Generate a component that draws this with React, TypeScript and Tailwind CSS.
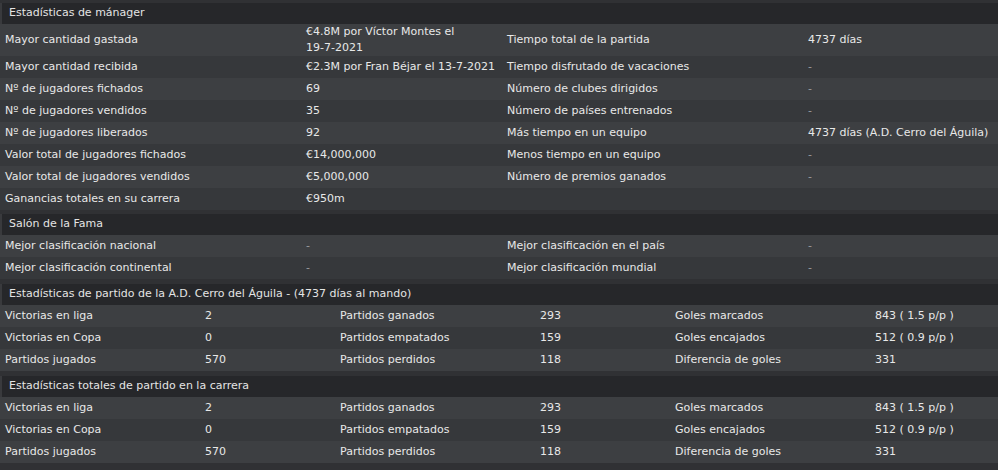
import React from 'react';

type Cell = string;

const managerRows: Cell[][] = [
  ['Mayor cantidad gastada', '€4.8M por Víctor Montes el 19-7-2021', 'Tiempo total de la partida', '4737 días'],
  ['Mayor cantidad recibida', '€2.3M por Fran Béjar el 13-7-2021', 'Tiempo disfrutado de vacaciones', '-'],
  ['Nº de jugadores fichados', '69', 'Número de clubes dirigidos', '-'],
  ['Nº de jugadores vendidos', '35', 'Número de países entrenados', '-'],
  ['Nº de jugadores liberados', '92', 'Más tiempo en un equipo', '4737 días (A.D. Cerro del Águila)'],
  ['Valor total de jugadores fichados', '€14,000,000', 'Menos tiempo en un equipo', '-'],
  ['Valor total de jugadores vendidos', '€5,000,000', 'Número de premios ganados', '-'],
  ['Ganancias totales en su carrera', '€950m', '', ''],
];

const fameRows: Cell[][] = [
  ['Mejor clasificación nacional', '-', 'Mejor clasificación en el país', '-'],
  ['Mejor clasificación continental', '-', 'Mejor clasificación mundial', '-'],
];

const matchRows: Cell[][] = [
  ['Victorias en liga', '2', 'Partidos ganados', '293', 'Goles marcados', '843 ( 1.5 p/p )'],
  ['Victorias en Copa', '0', 'Partidos empatados', '159', 'Goles encajados', '512 ( 0.9 p/p )'],
  ['Partidos jugados', '570', 'Partidos perdidos', '118', 'Diferencia de goles', '331'],
];

const Header = ({ title, className = '' }: { title: string; className?: string }) => (
  <div className={`h-[21px] flex items-center bg-[#26272a] border-l-2 border-[#393a3d] pl-[7px] text-[#e4e4e4] ${className}`}>
    {title}
  </div>
);

const rowBg = (i: number) => (i % 2 === 0 ? 'bg-[#3d3f42]' : 'bg-[#36383b]');

const cellText = (v: string) => (v === '-' ? 'text-[#9a9c9f]' : 'text-[#e8e8e8]');

// dates like 19-7-2021 must not break at the hyphens
const Words = ({ text }: { text: string }) => (
  <>
    {text.split(' ').map((w, k) => (
      <React.Fragment key={k}>
        {k > 0 && ' '}
        {w.length > 1 && w.includes('-') ? <span className="whitespace-nowrap">{w}</span> : w}
      </React.Fragment>
    ))}
  </>
);

const FourColRows = ({ rows }: { rows: Cell[][] }) => (
  <div>
    {rows.map((r, i) => (
      <div
        key={i}
        className={`grid grid-cols-[301px_201px_301px_195px] items-center ${rowBg(i)} ${
          i === 0 && r[1].length > 34 ? 'min-h-[30px]' : 'h-[22px]'
        }`}
      >
        {r.map((c, j) => (
          <div key={j} className={`pl-[5px] pr-1 leading-[16px] ${cellText(c)}`}>
            <Words text={c} />
          </div>
        ))}
      </div>
    ))}
  </div>
);

const SixColRows = ({ rows }: { rows: Cell[][] }) => (
  <div>
    {rows.map((r, i) => (
      <div
        key={i}
        className={`grid grid-cols-[200px_135px_200px_135px_200px_128px] items-center h-[22px] ${rowBg(i)}`}
      >
        {r.map((c, j) => (
          <div key={j} className={`pl-[5px] whitespace-nowrap ${cellText(c)}`}>
            {c}
          </div>
        ))}
      </div>
    ))}
  </div>
);

export default function App() {
  return (
    <div
      className="w-[998px] h-[470px] overflow-hidden bg-[#303134] pt-[3px] text-[11px]"
      style={{ fontFamily: '"DejaVu Sans", sans-serif' }}
    >
      <Header title="Estadísticas de mánager" />
      <FourColRows rows={managerRows} />

      <Header title="Salón de la Fama" className="mt-[4px]" />
      <FourColRows rows={fameRows} />

      <Header title="Estadísticas de partido de la A.D. Cerro del Águila - (4737 días al mando)" className="mt-[5px]" />
      <SixColRows rows={matchRows} />

      <Header title="Estadísticas totales de partido en la carrera" className="mt-[5px]" />
      <SixColRows rows={matchRows} />
    </div>
  );
}
